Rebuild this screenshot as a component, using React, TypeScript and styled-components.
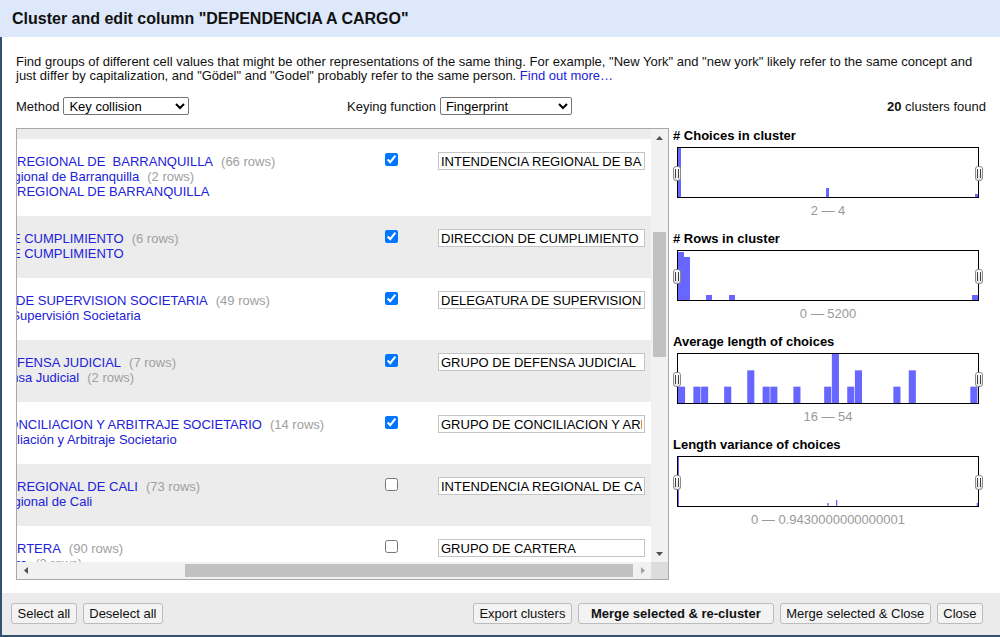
import React from 'react';
import styled, { createGlobalStyle } from 'styled-components';

const GlobalStyle = createGlobalStyle`
  html, body {
    margin: 0;
    padding: 0;
  }
  body {
    background: #34506e;
    font-family: "Liberation Sans", Arial, sans-serif;
  }
  *, *::before, *::after {
    box-sizing: border-box;
  }
`;

const LINK = '#2121d9';

const Dialog = styled.div`
  width: 1000px;
  height: 637px;
  display: flex;
  flex-direction: column;
  overflow: hidden;
`;

const Header = styled.div`
  flex: 0 0 37px;
  display: flex;
  align-items: center;
  padding: 1px 12px 0;
  background: #dde8fa;
  color: #111;
  font-size: 16px;
  font-weight: bold;
`;

const Body = styled.div`
  flex: 0 0 auto;
  margin-left: 2px;
  padding: 17px 14px 13px;
  background: #fff;
  display: flex;
  flex-direction: column;
`;

const Intro = styled.p`
  margin: 0;
  padding-top: 1px;
  font-size: 13px;
  line-height: 14px;
  color: #111;
`;

const Link = styled.a`
  color: ${LINK};
  text-decoration: none;
`;

const Controls = styled.div`
  display: grid;
  grid-template-columns: 331px auto 1fr;
  align-items: center;
  height: 18px;
  margin-top: 14px;
  font-size: 13px;
  color: #111;
`;

const Field = styled.label`
  display: flex;
  align-items: center;
  gap: 4px;
`;

const Select = styled.select<{ $w: number }>`
  width: ${p => p.$w}px;
  height: 18px;
  border: 1px solid #767676;
  border-radius: 2px;
  padding: 0 0 0 1px;
  background: #fff;
  color: #000;
  font: 13px "Liberation Sans", Arial, sans-serif;
`;

const Found = styled.div`
  justify-self: end;
`;

const Main = styled.div`
  display: grid;
  grid-template-columns: 653px 1fr;
  gap: 4px;
  margin-top: 13px;
  height: 452px;
`;

const TableBox = styled.div`
  border: 1px solid #a9a9a9;
  display: grid;
  grid-template-columns: 1fr 17px;
  grid-template-rows: 1fr 17px;
  overflow: hidden;
`;

const Viewport = styled.div`
  overflow: hidden;
  background: #fff;
`;

const Band = styled.div`
  height: 10px;
  background: #ececec;
`;

const Row = styled.div<{ $alt: boolean }>`
  display: flex;
  align-items: flex-start;
  padding: 13px 0 18px;
  background: ${p => (p.$alt ? '#ececec' : '#fff')};
`;

const ValuesCell = styled.div`
  flex: 0 0 459px;
  margin-left: -91px;
  padding-top: 2px;
  margin-bottom: -1px;
  font-size: 13px;
  line-height: 15px;
  overflow: hidden;
`;

const ValueLine = styled.div`
  white-space: pre;
  color: ${LINK};
`;

const Count = styled.span`
  margin-left: 8px;
  color: #a0a0a0;
`;

const CheckCell = styled.div`
  flex: 0 0 53px;
  padding-top: 1px;
`;

const Check = styled.input`
  display: block;
  margin: 0;
  width: 13px;
  height: 13px;
`;

const ValueInput = styled.input`
  width: 207px;
  height: 18px;
  border: 1px solid #c4c4c4;
  padding: 0 2px;
  background: #fff;
  color: #000;
  font: 13px "Liberation Sans", Arial, sans-serif;
  outline: none;
`;

const VScroll = styled.div`
  background: #f1f1f1;
  display: flex;
  flex-direction: column;
`;

const HScroll = styled.div`
  background: #f1f1f1;
  display: flex;
`;

const ArrowBtn = styled.div`
  flex: 0 0 17px;
  display: flex;
  align-items: center;
  justify-content: center;
`;

const VTrack = styled.div<{ $offset: number }>`
  flex: 1;
  padding-top: ${p => p.$offset}px;
`;

const HTrack = styled.div<{ $offset: number }>`
  flex: 1;
  display: flex;
  padding-left: ${p => p.$offset}px;
`;

const VThumb = styled.div<{ $size: number }>`
  height: ${p => p.$size}px;
  margin: 0 2px;
  background: #c1c1c1;
`;

const HThumb = styled.div<{ $size: number }>`
  width: ${p => p.$size}px;
  margin: 2px 0;
  background: #c1c1c1;
`;

const Corner = styled.div`
  background: #dcdcdc;
`;

const Facets = styled.div`
  display: flex;
  flex-direction: column;
`;

const Facet = styled.div`
  margin-bottom: 13px;
`;

const FacetTitle = styled.div`
  font-size: 13px;
  line-height: 15px;
  font-weight: bold;
  color: #000;
`;

const HistBox = styled.div`
  position: relative;
  margin: 4px 0 0 4px;
  width: 302px;
  height: 51px;
  border: 1px solid #000;
  background: #fff;

  svg {
    display: block;
  }
`;

const Handle = styled.div<{ $side: 'left' | 'right' }>`
  position: absolute;
  top: 18px;
  ${p => p.$side}: -5px;
  width: 8px;
  height: 15px;
  border: 1px solid #8a8a8a;
  border-radius: 3px;
  background: linear-gradient(#ffffff, #e2e2e2);
  display: flex;
  align-items: center;
  justify-content: center;

  &::after {
    content: '';
    width: 4px;
    height: 9px;
    border-left: 1px solid #444;
    border-right: 1px solid #444;
  }
`;

const RangeLabel = styled.div`
  margin: 5px 0 0 4px;
  width: 302px;
  text-align: center;
  font-size: 13px;
  line-height: 15px;
  color: #999;
`;

const Footer = styled.div`
  flex: 0 0 42px;
  margin-left: 2px;
  padding: 10px 17px 0 9px;
  background: #ebebeb;
  display: flex;
  align-items: flex-start;
  gap: 6px;
`;

const Spacer = styled.div`
  flex: 1;
`;

const Button = styled.button<{ $primary?: boolean }>`
  height: 21px;
  padding: 0 ${p => (p.$primary ? 12 : 5.5)}px;
  border: 1px solid #bcbcbc;
  border-radius: 3px;
  background: #f3f3f3;
  color: #111;
  font: ${p => (p.$primary ? 'bold' : 'normal')} 13px "Liberation Sans", Arial, sans-serif;
  cursor: pointer;
`;

type Arrow = 'up' | 'down' | 'left' | 'right';

const ArrowIcon = ({ dir, dim }: { dir: Arrow; dim?: boolean }) => {
  const fill = dim ? '#a3a3a3' : '#505050';
  const pts = {
    up: '0,4 3.5,0 7,4',
    down: '0,0 7,0 3.5,4',
    left: '4,0 4,7 0,3.5',
    right: '0,0 4,3.5 0,7',
  }[dir];
  const vertical = dir === 'up' || dir === 'down';
  return (
    <svg width={vertical ? 7 : 4} height={vertical ? 4 : 7}>
      <polygon points={pts} fill={fill} />
    </svg>
  );
};

type Choice = [string, number | null];

const clusters: { choices: Choice[]; value: string; checked: boolean }[] = [
  {
    choices: [
      ['INTENDENCIA REGIONAL DE  BARRANQUILLA', 66],
      ['Intendencia Regional de Barranquilla', 2],
      ['INTENDENCIA REGIONAL DE BARRANQUILLA', null],
    ],
    value: 'INTENDENCIA REGIONAL DE BARRANQUILLA',
    checked: true,
  },
  {
    choices: [
      ['DIRECCION DE CUMPLIMIENTO', 6],
      ['DIRECCION DE CUMPLIMIENTO ', null],
    ],
    value: 'DIRECCION DE CUMPLIMIENTO',
    checked: true,
  },
  {
    choices: [
      ['DELEGATURA DE SUPERVISION SOCIETARIA', 49],
      ['Delegatura de Supervisión Societaria', null],
    ],
    value: 'DELEGATURA DE SUPERVISION SOCIETARIA',
    checked: true,
  },
  {
    choices: [
      ['GRUPO DE DEFENSA JUDICIAL', 7],
      ['Grupo de Defensa Judicial', 2],
    ],
    value: 'GRUPO DE DEFENSA JUDICIAL',
    checked: true,
  },
  {
    choices: [
      ['GRUPO DE CONCILIACION Y ARBITRAJE SOCIETARIO', 14],
      ['Grupo de Conciliación y Arbitraje Societario', null],
    ],
    value: 'GRUPO DE CONCILIACION Y ARBITRAJE SOCIETARIO',
    checked: true,
  },
  {
    choices: [
      ['INTENDENCIA REGIONAL DE CALI', 73],
      ['Intendencia Regional de Cali', null],
    ],
    value: 'INTENDENCIA REGIONAL DE CALI',
    checked: false,
  },
  {
    choices: [
      ['GRUPO DE CARTERA', 90],
      ['Grupo de Cartera', 2],
    ],
    value: 'GRUPO DE CARTERA',
    checked: false,
  },
];

// bars are [x, width, height] inside a 300 x 49 plot
type Bar = [number, number, number];

const BIN = 300 / 39;
const avgBins: [number, number][] = [
  [0, 1], [2, 1], [3, 1], [6, 1], [9, 2], [11, 1], [12, 1], [15, 1],
  [19, 1], [20, 3], [22, 1], [23, 2], [28, 1], [30, 2], [38, 1],
];

const facets: { title: string; range: string; bars: Bar[] }[] = [
  {
    title: '# Choices in cluster',
    range: '2 — 4',
    bars: [[0, 3, 49], [148, 3, 9], [297, 3, 3]],
  },
  {
    title: '# Rows in cluster',
    range: '0 — 5200',
    bars: [[0, 6, 48], [6, 6, 43], [28, 6, 5], [51, 6, 5], [294, 6, 5]],
  },
  {
    title: 'Average length of choices',
    range: '16 — 54',
    bars: avgBins.map(([i, c]) => [i * BIN, BIN - 0.6, (c * 49) / 3] as Bar),
  },
  {
    title: 'Length variance of choices',
    range: '0 — 0.9430000000000001',
    bars: [[0, 1, 49], [149.3, 1.4, 3], [158, 1.3, 6], [298.7, 1.3, 3]],
  },
];

const Histogram = ({ bars }: { bars: Bar[] }) => (
  <HistBox>
    <svg width={300} height={49} viewBox="0 0 300 49">
      {bars.map(([x, w, h], i) => (
        <rect key={i} x={x} y={49 - h} width={w} height={h} fill="#6767ff" />
      ))}
    </svg>
    <Handle $side="left" />
    <Handle $side="right" />
  </HistBox>
);

export default function App() {
  return (
    <>
      <GlobalStyle />
      <Dialog>
        <Header>Cluster and edit column "DEPENDENCIA A CARGO"</Header>

        <Body>
          <Intro>
            Find groups of different cell values that might be other representations of the same
            thing. For example, "New York" and "new york" likely refer to the same concept and just
            differ by capitalization, and "Gödel" and "Godel" probably refer to the same person.{' '}
            <Link href="#">Find out more…</Link>
          </Intro>

          <Controls>
            <Field>
              Method
              <Select $w={126} defaultValue="key">
                <option value="key">Key collision</option>
                <option value="knn">Nearest neighbor</option>
              </Select>
            </Field>
            <Field>
              Keying function
              <Select $w={132} defaultValue="fingerprint">
                <option value="fingerprint">Fingerprint</option>
                <option value="ngram">N-gram fingerprint</option>
              </Select>
            </Field>
            <Found>
              <b>20</b> clusters found
            </Found>
          </Controls>

          <Main>
            <TableBox>
              <Viewport>
                <Band />
                {clusters.map((c, i) => (
                  <Row key={i} $alt={i % 2 === 1}>
                    <ValuesCell>
                      {c.choices.map(([text, n], j) => (
                        <ValueLine key={j}>
                          {text}
                          {n !== null && <Count>({n} rows)</Count>}
                        </ValueLine>
                      ))}
                    </ValuesCell>
                    <CheckCell>
                      <Check type="checkbox" defaultChecked={c.checked} />
                    </CheckCell>
                    <ValueInput readOnly defaultValue={c.value} />
                  </Row>
                ))}
              </Viewport>

              <VScroll>
                <ArrowBtn>
                  <ArrowIcon dir="up" />
                </ArrowBtn>
                <VTrack $offset={86}>
                  <VThumb $size={125} />
                </VTrack>
                <ArrowBtn>
                  <ArrowIcon dir="down" />
                </ArrowBtn>
              </VScroll>

              <HScroll>
                <ArrowBtn>
                  <ArrowIcon dir="left" />
                </ArrowBtn>
                <HTrack $offset={151}>
                  <HThumb $size={448} />
                </HTrack>
                <ArrowBtn>
                  <ArrowIcon dir="right" dim />
                </ArrowBtn>
              </HScroll>

              <Corner />
            </TableBox>

            <Facets>
              {facets.map(f => (
                <Facet key={f.title}>
                  <FacetTitle>{f.title}</FacetTitle>
                  <Histogram bars={f.bars} />
                  <RangeLabel>{f.range}</RangeLabel>
                </Facet>
              ))}
            </Facets>
          </Main>
        </Body>

        <Footer>
          <Button>Select all</Button>
          <Button>Deselect all</Button>
          <Spacer />
          <Button>Export clusters</Button>
          <Button $primary>Merge selected &amp; re-cluster</Button>
          <Button>Merge selected &amp; Close</Button>
          <Button>Close</Button>
        </Footer>
      </Dialog>
    </>
  );
}
